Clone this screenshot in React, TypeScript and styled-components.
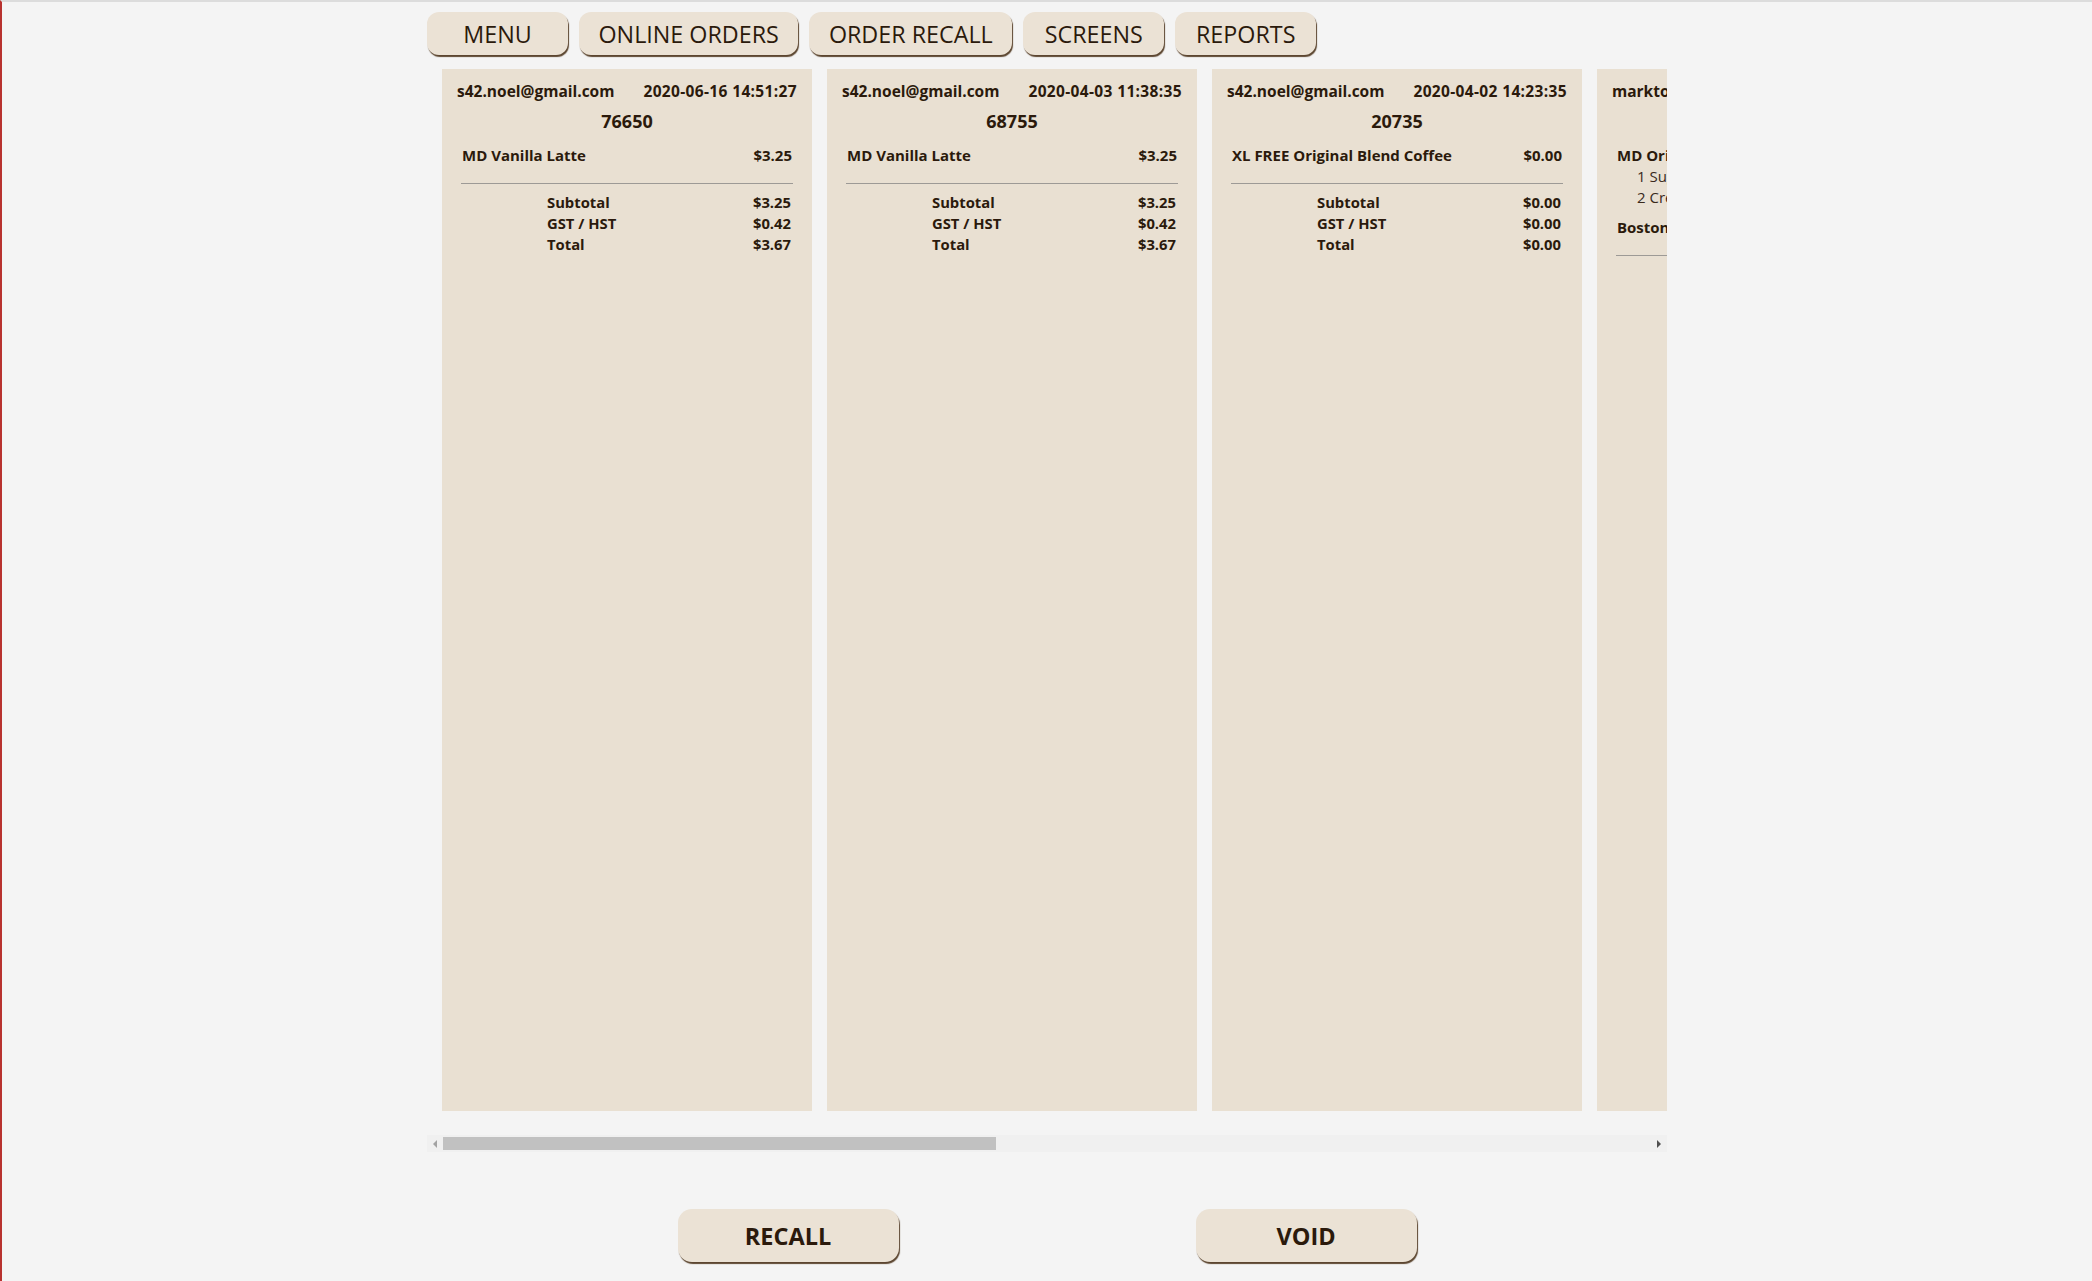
import React from 'react'
import styled, { createGlobalStyle } from 'styled-components'

const GlobalStyle = createGlobalStyle`
  html, body {
    margin: 0;
    padding: 0;
    background: #f4f4f4;
  }
  body {
    font-family: "Open Sans", "Liberation Sans", sans-serif;
    color: #2b1a0c;
  }
`

const CARD_WIDTH = 370
const CARD_GAP = 15
const VIEW_WIDTH = 1240
const ARROW_WIDTH = 16

const Page = styled.div`
  min-height: 1281px;
  box-sizing: border-box;
  border-left: 2px solid #b8322f;
  border-top: 2px solid #dcdcdc;
`

const Main = styled.div`
  width: ${VIEW_WIDTH}px;
  margin: 0 auto;
`

const Nav = styled.nav`
  display: flex;
  gap: 11px;
  padding-top: 10px;
`

const NavButton = styled.button`
  height: 43px;
  min-width: 141px;
  padding: 0 19.5px;
  border: none;
  border-radius: 12px;
  background: #ebe2d5;
  box-shadow: 1px 2px 1px #5c4630;
  font-family: inherit;
  font-size: 23.3px;
  color: #2b1a0c;
  cursor: pointer;
`

const Scroller = styled.div`
  display: flex;
  gap: ${CARD_GAP}px;
  margin-top: 14px;
  padding: 0 ${CARD_GAP}px 24px;
  overflow: hidden;
`

const ScrollTrack = styled.div`
  display: flex;
  height: 17px;
  background: #f0f0f0;
`

const Rail = styled.div`
  flex: 1;
  padding-top: 2px;
`

const Thumb = styled.div`
  height: 13px;
  background: #c1c1c1;
`

const Arrow = styled.div<{ $dir: 'left' | 'right' }>`
  flex: 0 0 ${ARROW_WIDTH}px;
  display: flex;
  align-items: center;
  justify-content: center;

  &::before {
    content: '';
    width: 0;
    height: 0;
    border-top: 4px solid transparent;
    border-bottom: 4px solid transparent;
    ${({ $dir }) => $dir === 'left'
      ? 'border-right: 4px solid #a3a3a3;'
      : 'border-left: 4px solid #505050;'}
  }
`

const Card = styled.div`
  flex: 0 0 ${CARD_WIDTH}px;
  height: 1042px;
  background: #e9e0d2;
  font-size: 15px;
  font-weight: 700;
`

const CardHead = styled.div`
  display: flex;
  justify-content: space-between;
  padding: 11px 15px 0;
  font-size: 15.5px;
  line-height: 22px;
  white-space: nowrap;
`

const Stamp = styled.span`
  letter-spacing: 0.35px;
`

const OrderNo = styled.div`
  margin-top: 7px;
  text-align: center;
  font-size: 18px;
  line-height: 24px;
`

const Items = styled.div`
  display: flex;
  flex-direction: column;
  gap: 9px;
  margin-top: 12px;
  padding: 0 20px;
`

const Line = styled.div`
  display: flex;
  justify-content: space-between;
  line-height: 21px;
  white-space: nowrap;
`

const Modifier = styled.div`
  padding-left: 20px;
  line-height: 21px;
  font-weight: 400;
  color: #3a2a1c;
  white-space: nowrap;
`

const Divider = styled.hr`
  margin: 17px 19px 0;
  border: none;
  border-top: 1px solid #9d9a96;
`

const Totals = styled.div`
  display: grid;
  grid-template-columns: 1fr auto;
  margin-top: 8px;
  padding: 0 21px 0 105px;
  font-size: 14.8px;
  line-height: 21px;
`

const Actions = styled.div`
  display: flex;
  justify-content: center;
  gap: 297px;
  margin-top: 57px;
`

const ActionButton = styled.button`
  width: 221px;
  height: 53px;
  border: none;
  border-radius: 14px;
  background: #ebe2d5;
  box-shadow: 1px 2px 1px #5c4630;
  font-family: inherit;
  font-size: 23.5px;
  font-weight: 700;
  color: #2b1a0c;
  cursor: pointer;
`

interface IItem {
  name: string
  price: string
  mods?: string[]
}

interface IOrder {
  email: string
  date: string
  number: string
  items: IItem[]
  subtotal: string
  tax: string
  total: string
}

const orders: IOrder[] = [
  {
    email: 's42.noel@gmail.com',
    date: '2020-06-16 14:51:27',
    number: '76650',
    items: [{ name: 'MD Vanilla Latte', price: '$3.25' }],
    subtotal: '$3.25',
    tax: '$0.42',
    total: '$3.67',
  },
  {
    email: 's42.noel@gmail.com',
    date: '2020-04-03 11:38:35',
    number: '68755',
    items: [{ name: 'MD Vanilla Latte', price: '$3.25' }],
    subtotal: '$3.25',
    tax: '$0.42',
    total: '$3.67',
  },
  {
    email: 's42.noel@gmail.com',
    date: '2020-04-02 14:23:35',
    number: '20735',
    items: [{ name: 'XL FREE Original Blend Coffee', price: '$0.00' }],
    subtotal: '$0.00',
    tax: '$0.00',
    total: '$0.00',
  },
  {
    email: 'marktoth@gmail.com',
    date: '2020-03-28 09:12:04',
    number: '51290',
    items: [
      { name: 'MD Original Blend Coffee', price: '$1.79', mods: ['1 Sugar', '2 Cream'] },
      { name: 'Boston Cream Donut', price: '$1.29' },
    ],
    subtotal: '$3.08',
    tax: '$0.40',
    total: '$3.48',
  },
  {
    email: 'marktoth@gmail.com',
    date: '2020-03-27 08:45:51',
    number: '49187',
    items: [{ name: 'LG French Vanilla', price: '$2.39' }],
    subtotal: '$2.39',
    tax: '$0.31',
    total: '$2.70',
  },
  {
    email: 'j.barnes@outlook.com',
    date: '2020-03-25 16:02:19',
    number: '33412',
    items: [{ name: 'SM Iced Capp', price: '$2.49' }],
    subtotal: '$2.49',
    tax: '$0.32',
    total: '$2.81',
  },
  {
    email: 'j.barnes@outlook.com',
    date: '2020-03-20 12:30:44',
    number: '18063',
    items: [{ name: 'MD Steeped Tea', price: '$1.69' }],
    subtotal: '$1.69',
    tax: '$0.22',
    total: '$1.91',
  },
]

const tabs = ['MENU', 'ONLINE ORDERS', 'ORDER RECALL', 'SCREENS', 'REPORTS']

const OrderCard = ({ order }: { order: IOrder }) => (
  <Card>
    <CardHead>
      <span>{order.email}</span>
      <Stamp>{order.date}</Stamp>
    </CardHead>
    <OrderNo>{order.number}</OrderNo>
    <Items>
      {order.items.map((item, index) =>
        <div key={index}>
          <Line>
            <span>{item.name}</span>
            <span>{item.price}</span>
          </Line>
          {item.mods && item.mods.map((mod) => <Modifier key={mod}>{mod}</Modifier>)}
        </div>
      )}
    </Items>
    <Divider />
    <Totals>
      <span>Subtotal</span>
      <span>{order.subtotal}</span>
      <span>GST / HST</span>
      <span>{order.tax}</span>
      <span>Total</span>
      <span>{order.total}</span>
    </Totals>
  </Card>
)

const App = () => {
  const contentWidth = CARD_GAP * 2 + orders.length * CARD_WIDTH + (orders.length - 1) * CARD_GAP
  const railWidth = VIEW_WIDTH - ARROW_WIDTH * 2
  const thumbWidth = Math.round(railWidth * VIEW_WIDTH / contentWidth)

  return (
    <Page>
      <GlobalStyle />
      <Main>
        <Nav>
          {tabs.map((tab) => <NavButton key={tab}>{tab}</NavButton>)}
        </Nav>
        <Scroller>
          {orders.map((order) => <OrderCard key={order.number} order={order} />)}
        </Scroller>
        <ScrollTrack>
          <Arrow $dir="left" />
          <Rail>
            <Thumb style={{ width: thumbWidth }} />
          </Rail>
          <Arrow $dir="right" />
        </ScrollTrack>
        <Actions>
          <ActionButton>RECALL</ActionButton>
          <ActionButton>VOID</ActionButton>
        </Actions>
      </Main>
    </Page>
  )
}

export default App
